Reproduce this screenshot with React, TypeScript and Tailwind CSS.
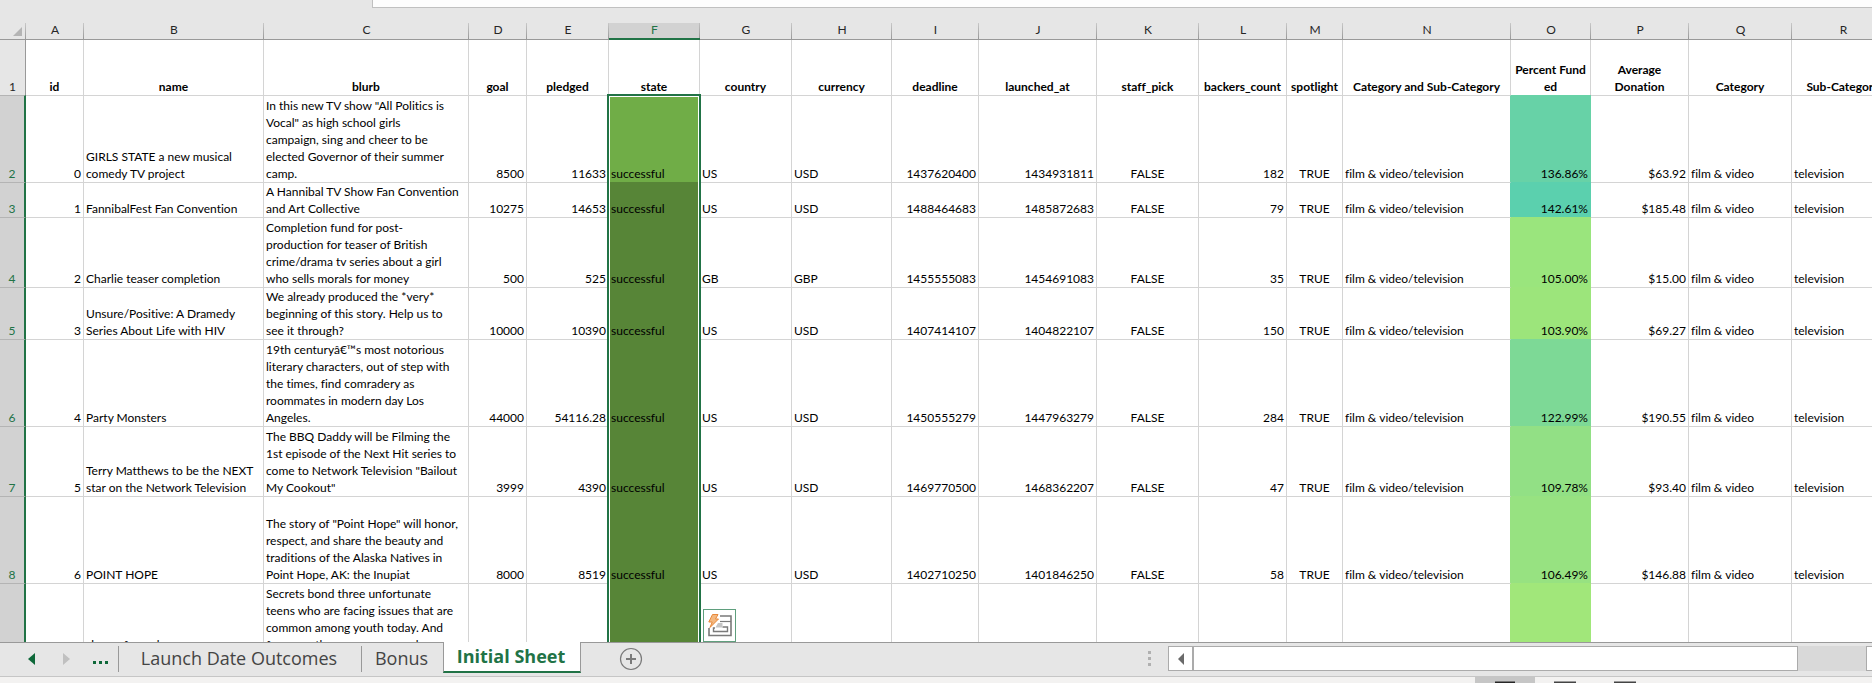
import React from "react";

type Align = "left" | "center" | "right";

const columns: { letter: string; width: string; align: Align; title: string }[] = [
  { letter: "A", width: "w-[58px]", align: "right", title: "id" },
  { letter: "B", width: "w-[180px]", align: "left", title: "name" },
  { letter: "C", width: "w-[205px]", align: "left", title: "blurb" },
  { letter: "D", width: "w-[58px]", align: "right", title: "goal" },
  { letter: "E", width: "w-[82px]", align: "right", title: "pledged" },
  { letter: "F", width: "w-[91px]", align: "left", title: "state" },
  { letter: "G", width: "w-[92px]", align: "left", title: "country" },
  { letter: "H", width: "w-[100px]", align: "left", title: "currency" },
  { letter: "I", width: "w-[87px]", align: "right", title: "deadline" },
  { letter: "J", width: "w-[118px]", align: "right", title: "launched_at" },
  { letter: "K", width: "w-[102px]", align: "center", title: "staff_pick" },
  { letter: "L", width: "w-[88px]", align: "right", title: "backers_count" },
  { letter: "M", width: "w-[56px]", align: "center", title: "spotlight" },
  { letter: "N", width: "w-[168px]", align: "left", title: "Category and Sub-Category" },
  { letter: "O", width: "w-[80px]", align: "right", title: "Percent Fund\ned" },
  { letter: "P", width: "w-[98px]", align: "right", title: "Average\nDonation" },
  { letter: "Q", width: "w-[103px]", align: "left", title: "Category" },
  { letter: "R", width: "w-[103px]", align: "left", title: "Sub-Category" },
];

const rows: { n: number; height: string; scale: string; edge: string; cells: string[] }[] = [
  {
    n: 2, height: "h-[87px]", scale: "bg-[#67d2a7] border-[#67d2a7]", edge: "border-r-[#67d2a7]",
    cells: ["0", "GIRLS STATE a new musical\ncomedy TV project", "In this new TV show \"All Politics is\nVocal\" as high school girls\ncampaign, sing and cheer to be\nelected Governor of their summer\ncamp.", "8500", "11633", "successful", "US", "USD", "1437620400", "1434931811", "FALSE", "182", "TRUE", "film & video/television", "136.86%", "$63.92", "film & video", "television"],
  },
  {
    n: 3, height: "h-[35px]", scale: "bg-[#5bd0ae] border-[#5bd0ae]", edge: "border-r-[#5bd0ae]",
    cells: ["1", "FannibalFest Fan Convention", "A Hannibal TV Show Fan Convention\nand Art Collective", "10275", "14653", "successful", "US", "USD", "1488464683", "1485872683", "FALSE", "79", "TRUE", "film & video/television", "142.61%", "$185.48", "film & video", "television"],
  },
  {
    n: 4, height: "h-[70px]", scale: "bg-[#9ae57d] border-[#9ae57d]", edge: "border-r-[#9ae57d]",
    cells: ["2", "Charlie teaser completion", "Completion fund for post-\nproduction for teaser of British\ncrime/drama tv series about a girl\nwho sells morals for money", "500", "525", "successful", "GB", "GBP", "1455555083", "1454691083", "FALSE", "35", "TRUE", "film & video/television", "105.00%", "$15.00", "film & video", "television"],
  },
  {
    n: 5, height: "h-[52px]", scale: "bg-[#9ce57b] border-[#9ce57b]", edge: "border-r-[#9ce57b]",
    cells: ["3", "Unsure/Positive: A Dramedy\nSeries About Life with HIV", "We already produced the *very*\nbeginning of this story. Help us to\nsee it through?", "10000", "10390", "successful", "US", "USD", "1407414107", "1404822107", "FALSE", "150", "TRUE", "film & video/television", "103.90%", "$69.27", "film & video", "television"],
  },
  {
    n: 6, height: "h-[87px]", scale: "bg-[#7dd996] border-[#7dd996]", edge: "border-r-[#7dd996]",
    cells: ["4", "Party Monsters", "19th centuryâ€™s most notorious\nliterary characters, out of step with\nthe times, find comradery as\nroommates in modern day Los\nAngeles.", "44000", "54116.28", "successful", "US", "USD", "1450555279", "1447963279", "FALSE", "284", "TRUE", "film & video/television", "122.99%", "$190.55", "film & video", "television"],
  },
  {
    n: 7, height: "h-[70px]", scale: "bg-[#92e085] border-[#92e085]", edge: "border-r-[#92e085]",
    cells: ["5", "Terry Matthews to be the NEXT\nstar on the Network Television", "The BBQ Daddy will be Filming the\n1st episode of the Next Hit series to\ncome to Network Television \"Bailout\nMy Cookout\"", "3999", "4390", "successful", "US", "USD", "1469770500", "1468362207", "FALSE", "47", "TRUE", "film & video/television", "109.78%", "$93.40", "film & video", "television"],
  },
  {
    n: 8, height: "h-[87px]", scale: "bg-[#97e281] border-[#97e281]", edge: "border-r-[#97e281]",
    cells: ["6", "POINT HOPE", "The story of \"Point Hope\" will honor,\nrespect, and share the beauty and\ntraditions of the Alaska Natives in\nPoint Hope, AK: the Inupiat", "8000", "8519", "successful", "US", "USD", "1402710250", "1401846250", "FALSE", "58", "TRUE", "film & video/television", "106.49%", "$146.88", "film & video", "television"],
  },
];

const partialRow: Record<string, string> = {
  B: "\n\n\nshow of ours has",
  C: "Secrets bond three unfortunate\nteens who are facing issues that are\ncommon among youth today. And\nfor some the cause can now be",
};

const alignClass: Record<Align, string> = {
  left: "text-left",
  center: "text-center",
  right: "text-right",
};

function cellTone(index: number, n: number, scale: string, edge: string) {
  if (index === 5) {
    return n === 2
      ? "bg-[#70ad47] border-[#70ad47]"
      : "bg-[#578537] border-[#578537]";
  }
  if (index === 13) return `${edge} border-t-[#d4d4d4]`;
  if (index === 14) return scale;
  return "border-[#d4d4d4]";
}

function Sheet() {
  return (
    <table className="w-[1895px] table-fixed border-separate border-spacing-0 bg-white text-[12px] leading-[17px] text-black [font-variant-ligatures:none]">
      <colgroup>
        <col className="w-[26px]" />
        {columns.map((c) => (
          <col key={c.letter} className={c.width} />
        ))}
      </colgroup>
      <thead>
        <tr className="h-[17px] bg-[#e6e6e6] leading-[15px]">
          <th
            aria-label="Select all"
            className="border-b border-[#999] bg-[linear-gradient(to_bottom,#c8c8c8,#999)] bg-[length:1px_100%] bg-right bg-no-repeat p-0 align-bottom"
          >
            <svg viewBox="0 0 10 10" className="mr-1 mb-[3px] ml-auto block size-[9px]" aria-hidden="true">
              <path d="M10 0V10H0Z" fill="#b4b4b4" />
            </svg>
          </th>
          {columns.map((c) => (
            <th
              key={c.letter}
              scope="col"
              className={
                c.letter === "F"
                  ? "border-b-2 border-[#217346] bg-[#d2d2d2] bg-[linear-gradient(to_bottom,#c0c0c0,#999)] bg-[length:1px_100%] bg-right bg-no-repeat p-0 align-top leading-[14px] font-normal text-[#217346]"
                  : "border-b border-[#999] bg-[linear-gradient(to_bottom,#c8c8c8,#999)] bg-[length:1px_100%] bg-right bg-no-repeat p-0 align-top leading-[14px] font-normal text-[#262626]"
              }
            >
              {c.letter}
            </th>
          ))}
        </tr>
      </thead>
      <tbody>
        <tr className="h-[55px]">
          <th scope="row" className="border-r border-[#999] bg-[#e6e6e6] p-0 text-center align-bottom font-normal text-[#262626]">
            1
          </th>
          {columns.map((c) => (
            <td key={c.letter} className="overflow-hidden border-r border-[#d4d4d4] p-0 text-center align-bottom font-bold whitespace-pre">
              {c.title}
            </td>
          ))}
        </tr>
        {rows.map((r) => (
          <tr key={r.n} className={r.height}>
            <th scope="row" className="border-t border-r-2 border-t-[#b4b4b4] border-r-[#217346] bg-[#d2d2d2] p-0 text-center align-bottom font-normal text-[#217346]">
              {r.n}
            </th>
            {r.cells.map((text, i) => (
              <td
                key={i}
                className={`overflow-hidden border-t border-r px-[2px] py-0 align-bottom whitespace-pre ${alignClass[columns[i].align]} ${cellTone(i, r.n, r.scale, r.edge)}`}
              >
                {text}
              </td>
            ))}
          </tr>
        ))}
        <tr className="h-[87px]">
          <th aria-label="9" className="border-t border-r-2 border-t-[#b4b4b4] border-r-[#217346] bg-[#d2d2d2] p-0" />
          {columns.map((c, i) => (
            <td
              key={c.letter}
              className={`border-t border-r px-[2px] pt-px pb-0 align-top whitespace-pre ${cellTone(i, 9, "bg-[#a1e77a] border-[#a1e77a]", "border-r-[#a1e77a]")}`}
            >
              {partialRow[c.letter]}
            </td>
          ))}
        </tr>
      </tbody>
    </table>
  );
}

function PasteOptions() {
  return (
    <button
      type="button"
      aria-label="Quick analysis"
      className="absolute bottom-0 left-[703px] flex size-[33px] items-center justify-center border border-[#5f9f7d] bg-white"
    >
      <svg viewBox="0 0 24 24" className="size-6" fill="none" aria-hidden="true">
        <path d="M12 2H23V21.5H1V14" stroke="#7a7a7a" strokeWidth="1.6" />
        <path d="M12 7.5H23" stroke="#7a7a7a" strokeWidth="1.2" />
        <path d="M7 14H5.5V17.5H19.5V13H14.5" stroke="#7a7a7a" strokeWidth="1.4" />
        <path d="M10 9H14.5V13.5H7.5Z" fill="#c4c4c4" />
        <path d="M4.5 0.5H10L7.5 5H10.5L2 13.5L4.2 8H0.8Z" fill="#f3b880" stroke="#e8883a" strokeWidth="1" />
      </svg>
    </button>
  );
}

function SheetTabs() {
  return (
    <nav aria-label="Sheets" className="flex flex-1 items-start font-['Open_Sans','Noto_Sans',sans-serif] text-[18px] leading-[24px] text-[#444]">
      <div className="flex h-full w-[118px] items-center border-t border-[#999] pb-0.5 pl-7">
        <button type="button" aria-label="Previous sheets">
          <svg viewBox="0 0 7 12" className="h-3 w-[7px]" aria-hidden="true">
            <path d="M7 0V12L0 6Z" fill="#0e6839" />
          </svg>
        </button>
        <button type="button" aria-label="Next sheets" className="ml-7">
          <svg viewBox="0 0 7 12" className="h-3 w-[7px]" aria-hidden="true">
            <path d="M0 0V12L7 6Z" fill="#c0c0c0" />
          </svg>
        </button>
        <button type="button" aria-label="More sheets" className="mt-2 ml-[23px] flex gap-[3px]">
          <span className="size-[3px] bg-[#0e6839]" />
          <span className="size-[3px] bg-[#0e6839]" />
          <span className="size-[3px] bg-[#0e6839]" />
        </button>
      </div>
      <div className="flex h-full items-start border-t border-[#999] pt-[3px]">
        <button type="button" className="w-[243px] border-l border-[#999] pr-0.5 pb-0.5 text-center">
          Launch Date Outcomes
        </button>
        <button type="button" className="w-[82px] border-l border-[#999] pr-0.5 pb-0.5 text-center">
          Bonus
        </button>
      </div>
      <button
        type="button"
        aria-current="page"
        className="h-[31px] w-[138px] border-x border-b-2 border-x-[#999] border-b-[#217346] bg-white pr-0.5 pb-px text-center font-bold text-[#217346]"
      >
        Initial Sheet
      </button>
      <div className="flex h-full flex-1 items-center justify-between border-t border-[#999] pr-[17px] pb-px pl-[38px]">
        <button type="button" aria-label="New sheet">
          <svg viewBox="0 0 24 24" className="size-6" fill="none" stroke="#7a7a7a" aria-hidden="true">
            <circle cx="12" cy="12" r="10.5" strokeWidth="1.2" />
            <path d="M12 7V17M7 12H17" strokeWidth="2" />
          </svg>
        </button>
        <span className="mb-px flex flex-col gap-[3px]" aria-hidden="true">
          <span className="size-[3px] bg-[#b0b0b0]" />
          <span className="size-[3px] bg-[#b0b0b0]" />
          <span className="size-[3px] bg-[#b0b0b0]" />
        </span>
      </div>
    </nav>
  );
}

function ScrollBar() {
  return (
    <div className="flex w-[704px] flex-none items-start border-t border-[#999] pt-[3px]">
      <div className="flex h-[25px] flex-1 bg-[#d9d9d9]">
        <button type="button" aria-label="Scroll left" className="flex w-[25px] items-center justify-center border border-[#ababab] bg-white">
          <svg viewBox="0 0 6 12" className="h-3 w-1.5" aria-hidden="true">
            <path d="M6 0V12L0 6Z" fill="#6a6a6a" />
          </svg>
        </button>
        <div className="w-[605px] border border-[#ababab] bg-white" />
        <button type="button" aria-label="Scroll right" className="ml-auto w-[6px] border border-r-0 border-[#ababab] bg-white" />
      </div>
    </div>
  );
}

function StatusBar() {
  return (
    <footer className="flex h-1.5 flex-none justify-end bg-[#f3f2f1] pr-[217px]">
      <button type="button" aria-label="Normal view" className="flex w-[60px] items-end justify-center bg-[#c6c6c6]">
        <span className="h-0.5 w-5 border-t border-[#777] bg-[#262626]" />
      </button>
      <button type="button" aria-label="Page layout view" className="flex w-[60px] items-end justify-center">
        <span className="h-0.5 w-[22px] border-t border-[#999] bg-[#444]" />
      </button>
      <button type="button" aria-label="Page break preview" className="flex w-[60px] items-end justify-center">
        <span className="h-0.5 w-[22px] border-t border-[#999] bg-[#444]" />
      </button>
    </footer>
  );
}

export default function App() {
  return (
    <div className="flex h-screen flex-col overflow-hidden bg-[#e6e6e6] font-['Lato','Liberation_Sans',sans-serif]">
      <div className="h-[23px] flex-none pl-[372px]">
        <div className="h-2 border-b border-l border-[#c0c0c0] bg-[#fdfdfd]" />
      </div>
      <main className="relative min-h-0 flex-1 overflow-hidden">
        <Sheet />
        <div className="pointer-events-none absolute top-[71px] -bottom-1 left-[607px] w-[94px] border-2 border-[#217346] inset-ring inset-ring-white" />
        <PasteOptions />
      </main>
      <div className="flex h-[35px] flex-none border-b border-[#c6c6c6]">
        <SheetTabs />
        <ScrollBar />
      </div>
      <StatusBar />
    </div>
  );
}
